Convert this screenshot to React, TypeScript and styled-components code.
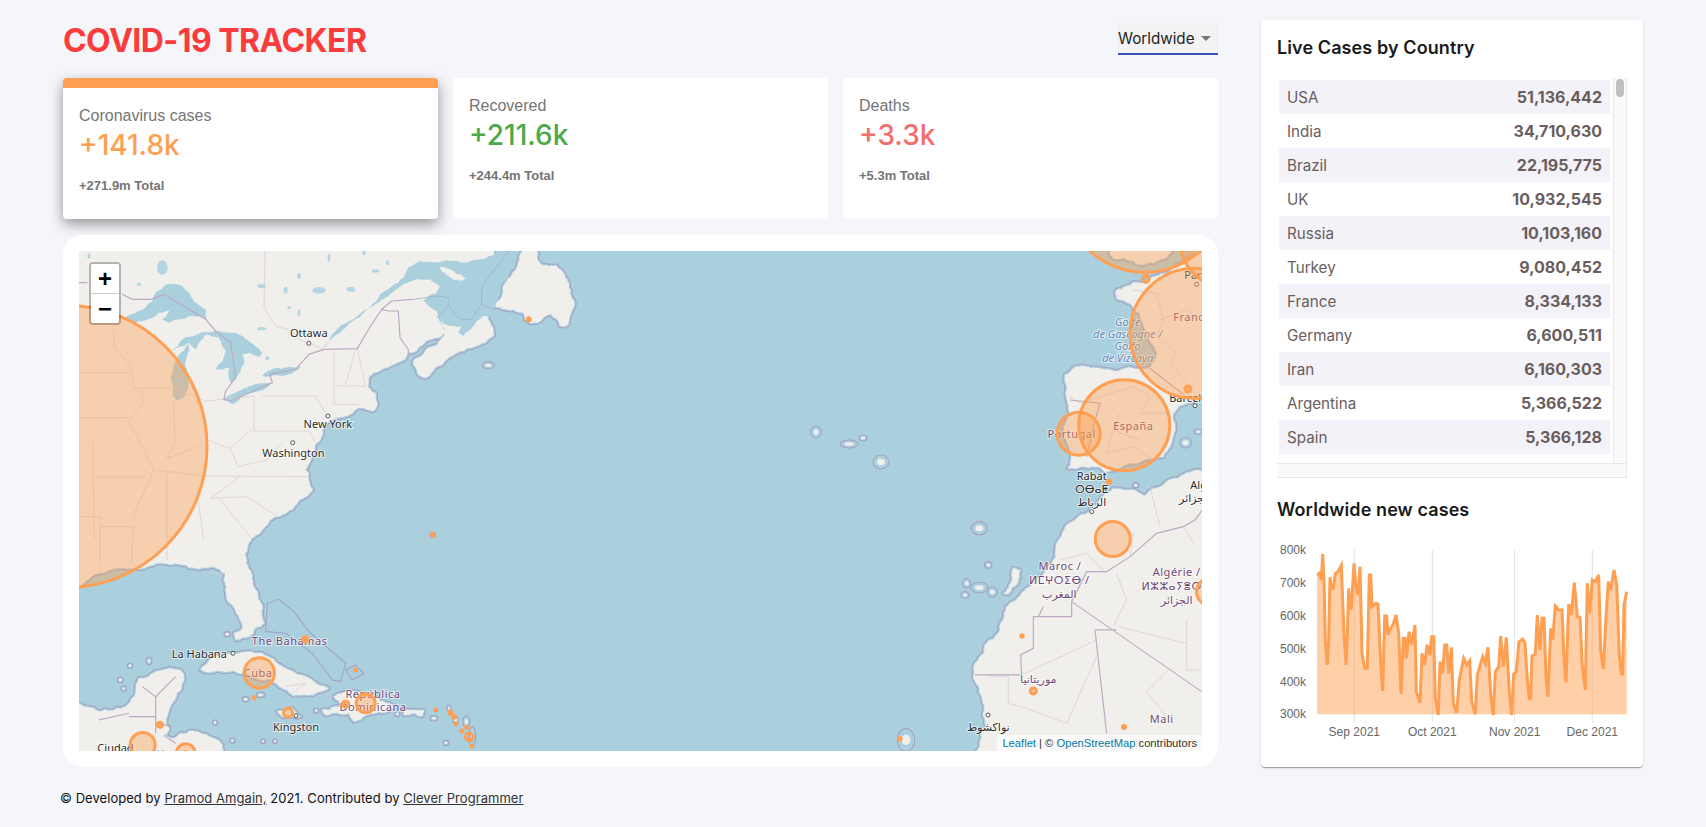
import React from "react";
import styled, { createGlobalStyle } from "styled-components";

const GlobalStyle = createGlobalStyle`
    html, body {
        margin: 0;
        padding: 0;
        background-color: #f5f6fa;
        font-family: Inter, "Liberation Sans", sans-serif;
        overflow: hidden;
    }
`;

//=========================
// 	      LAYOUT
//=========================

const AppWrap = styled.div`
    display: flex;
    justify-content: space-between;
    padding: 20px 63px 0 63px;
    height: 807px;
`;

const LeftColumn = styled.div`
    width: 1155px;
    display: flex;
    flex-direction: column;
`;

const Header = styled.div`
    height: 38px;
    margin-bottom: 20px;
    display: flex;
    align-items: center;
    justify-content: space-between;
`;

const Title = styled.h1`
    margin: 0;
    padding-top: 4px;
    font-size: 32px;
    line-height: 38px;
    font-weight: 700;
    letter-spacing: -0.55px;
    color: #fc3c3c;
`;

const CountrySelect = styled.div`
    width: 100px;
    height: 32px;
    box-sizing: border-box;
    display: flex;
    align-items: center;
    justify-content: space-between;
    padding-right: 7px;
    background-color: #f3f3f3;
    border-bottom: 2px solid #3f51b5;
    font-size: 15.2px;
    color: #1f1f1f;
`;

const SelectCaret = styled.span`
    width: 0;
    height: 0;
    border-left: 5px solid transparent;
    border-right: 5px solid transparent;
    border-top: 5px solid #757575;
`;

//=========================
// 	     INFO CARDS
//=========================

const Stats = styled.div`
    display: flex;
    gap: 15px;
    margin-bottom: 16px;
`;

const InfoCard = styled.div<{ $selected?: boolean }>`
    flex: 1;
    height: 141px;
    box-sizing: border-box;
    padding: 16px;
    background-color: #fff;
    border-radius: 4px;
    border-top: ${(p) => (p.$selected ? "10px solid #ff9f52" : "0")};
    box-shadow: ${(p) => (p.$selected ? "0 5px 14px rgba(0, 0, 0, 0.4)" : "none")};
`;

const InfoLabel = styled.div`
    font-family: "Liberation Sans", sans-serif;
    font-size: 16px;
    line-height: 24px;
    color: #757575;
`;

const InfoValue = styled.div<{ $tone: string }>`
    font-size: 28px;
    line-height: 34px;
    font-weight: 500;
    margin-bottom: 14px;
    color: ${(p) => p.$tone};
`;

const InfoTotal = styled.div`
    font-family: "Liberation Sans", sans-serif;
    font-size: 13px;
    line-height: 20px;
    font-weight: 700;
    color: #757575;
`;

//=========================
// 	        MAP
//=========================

const MapCard = styled.div`
    height: 532px;
    box-sizing: border-box;
    padding: 16px;
    background-color: #fff;
    border-radius: 20px;
`;

const MapFrame = styled.div`
    position: relative;
    height: 500px;
    overflow: hidden;
    background-color: #aad0de;
`;

const MapSvg = styled.svg`
    display: block;
    * {
        vector-effect: non-scaling-stroke;
    }
`;

const CoastHalo = styled.path`
    fill: none;
    stroke: #a5a0c0;
    stroke-width: 4.6;
    stroke-linejoin: round;
`;

const CoastGap = styled.path`
    fill: none;
    stroke: #aad0de;
    stroke-width: 2.6;
    stroke-linejoin: round;
`;

const Land = styled.path`
    fill: #f1efeb;
`;

const Water = styled.path`
    fill: #aad0de;
`;

const SmallLake = styled.ellipse`
    fill: #b4d6e2;
`;

const Shoal = styled.path`
    fill: none;
    stroke: #a5a0c0;
    stroke-width: 1.1;
`;

const CountryLine = styled.path`
    fill: none;
    stroke: #bcaac2;
    stroke-width: 1.2;
`;

const StateLine = styled.path`
    fill: none;
    stroke: #d8cfd6;
    stroke-width: 0.8;
`;

const SeaLine = styled.path`
    fill: none;
    stroke: #9fb3c4;
    stroke-width: 0.8;
`;

const IsleRing = styled.ellipse`
    fill: none;
    stroke: #a5a0c0;
    stroke-width: 1.1;
`;

const IsleCore = styled.ellipse`
    fill: #f1efeb;
`;

const Bubble = styled.circle`
    fill: rgba(255, 159, 82, 0.4);
    stroke: #ff9f52;
    stroke-width: 3;
`;

const CityDot = styled.circle`
    fill: #fff;
    stroke: #444;
    stroke-width: 0.9;
`;

const PlaceLabel = styled.text<{ $kind?: "country" | "sea" }>`
    font-family: "Noto Sans", "DejaVu Sans", sans-serif;
    font-size: 11px;
    font-style: ${(p) => (p.$kind === "sea" ? "italic" : "normal")};
    letter-spacing: ${(p) => (p.$kind === "country" ? "0.5px" : "0")};
    text-anchor: middle;
    fill: ${(p) => (p.$kind === "country" ? "#6e4a78" : p.$kind === "sea" ? "#5f87b8" : "#2b2b2b")};
    stroke: rgba(255, 255, 255, 0.65);
    stroke-width: 2px;
    paint-order: stroke;
`;

const ZoomControl = styled.div`
    position: absolute;
    top: 11px;
    left: 10px;
    width: 28px;
    border-radius: 4px;
    background-clip: padding-box;
    border: 2px solid rgba(0, 0, 0, 0.25);
`;

const ZoomButton = styled.div<{ $last?: boolean }>`
    height: 29px;
    display: flex;
    align-items: center;
    justify-content: center;
    background-color: #fff;
    font-family: "Liberation Sans", sans-serif;
    font-size: 24px;
    font-weight: 700;
    color: #000;
    border-bottom: ${(p) => (p.$last ? "0" : "1px solid #ccc")};
    border-radius: ${(p) => (p.$last ? "0 0 2px 2px" : "2px 2px 0 0")};
`;

const Attribution = styled.div`
    position: absolute;
    right: 0;
    bottom: 0;
    padding: 0 5px;
    background-color: rgba(255, 255, 255, 0.7);
    font-family: "Liberation Sans", sans-serif;
    font-size: 11.2px;
    line-height: 16px;
    color: #333;
`;

const AttributionLink = styled.span`
    color: #0078a8;
`;

//=========================
// 	      FOOTER
//=========================

const Footer = styled.div`
    margin-top: 22px;
    margin-left: -3px;
    font-size: 13px;
    line-height: 18px;
    letter-spacing: 0.05px;
    color: #111;
`;

const FooterLink = styled.a`
    color: #333;
    text-decoration: underline;
`;

//=========================
// 	   RIGHT PANEL
//=========================

const SidePanel = styled.div`
    width: 382px;
    height: 747px;
    box-sizing: border-box;
    padding: 16px;
    background-color: #fff;
    border-radius: 4px;
    box-shadow: 0 2px 1px -1px rgba(0, 0, 0, 0.2), 0 1px 1px 0 rgba(0, 0, 0, 0.14), 0 1px 3px 0 rgba(0, 0, 0, 0.12);
`;

const PanelTitle = styled.h3`
    margin: 0;
    padding-top: 1px;
    font-size: 18px;
    line-height: 22px;
    font-weight: 600;
    letter-spacing: 0.1px;
    color: #1a1a1a;
`;

const TableFrame = styled.div`
    margin-top: 19px;
    width: 350px;
    height: 400px;
    display: grid;
    grid-template-columns: 336px 14px;
    grid-template-rows: 385px 15px;
`;

const RowList = styled.div`
    padding: 2px 3px 0 2px;
    overflow: hidden;
`;

const CountryRow = styled.div`
    height: 34px;
    box-sizing: border-box;
    display: flex;
    align-items: center;
    justify-content: space-between;
    padding: 0 8px;
    font-size: 15.2px;
    color: #6a5d5d;
    &:nth-of-type(odd) {
        background-color: #f3f2f8;
    }
`;

const CountryCases = styled.strong`
    font-size: 16px;
    font-weight: 700;
`;

const VerticalTrack = styled.div`
    border-left: 1px solid #e8e8e8;
    border-right: 1px solid #e8e8e8;
    background-color: #fafafa;
    padding: 1px 2px 0 2px;
`;

const ScrollThumb = styled.div`
    width: 8px;
    height: 18px;
    border-radius: 4px;
    background-color: #c1c1c1;
`;

const HorizontalTrack = styled.div`
    grid-column: 1 / 3;
    background-color: #fafafa;
    border-top: 1px solid #e8e8e8;
    border-bottom: 1px solid #e8e8e8;
    border-right: 1px solid #e8e8e8;
`;

const ChartTitle = styled(PanelTitle)`
    margin-top: 20px;
`;

const ChartSvg = styled.svg`
    display: block;
    margin-top: 19px;
    overflow: visible;
`;

const ChartGrid = styled.line`
    stroke: #e2e2e2;
    stroke-width: 1;
`;

const ChartLine = styled.polyline`
    fill: none;
    stroke: #ff9f52;
    stroke-width: 3;
    stroke-linejoin: miter;
`;

const ChartArea = styled.polygon`
    fill: rgba(255, 159, 82, 0.5);
`;

const ChartLabel = styled.text<{ $axis: "x" | "y" }>`
    font-family: "Liberation Sans", sans-serif;
    font-size: 12px;
    fill: #666;
    text-anchor: ${(p) => (p.$axis === "y" ? "end" : "middle")};
`;

//=========================
// 	       DATA
//=========================

const countries = [
    ["USA", "51,136,442"],
    ["India", "34,710,630"],
    ["Brazil", "22,195,775"],
    ["UK", "10,932,545"],
    ["Russia", "10,103,160"],
    ["Turkey", "9,080,452"],
    ["France", "8,334,133"],
    ["Germany", "6,600,511"],
    ["Iran", "6,160,303"],
    ["Argentina", "5,366,522"],
    ["Spain", "5,366,128"],
];

const chartRaw = [
    201,135, 208,130, 214,150, 218,72, 222,150, 226,330, 232,405, 236,330, 240,142, 244,175, 250,175, 256,130,
    264,125, 274,106, 282,310, 288,405, 292,320, 296,175, 300,235, 304,235, 312,100, 318,170, 324,195, 330,110,
    336,370, 344,415, 352,415, 358,135, 362,135, 366,230, 378,220, 384,222, 392,400, 398,483, 404,258, 410,258,
    414,315, 422,295, 430,282, 438,255, 446,310, 453,492, 460,325, 465,325, 469,385, 477,305, 485,345, 495,285,
    499,485, 510,518, 516,370, 524,405, 531,345, 539,375, 545,320, 551,320, 556,505, 565,555, 570,395, 578,430,
    584,345, 590,345, 596,430, 604,352, 610,520, 620,548, 628,450, 641,385, 650,405, 659,392, 665,515, 676,553,
    682,435, 698,380, 706,400, 714,352, 722,495, 730,555, 736,425, 746,410, 752,318, 760,410, 769,322, 778,485,
    785,555, 791,432, 799,425, 807,335, 818,327, 825,340, 832,450, 838,505, 842,505, 846,377, 856,373, 862,255,
    870,360, 876,265, 882,265, 888,440, 894,500, 902,295, 908,330, 916,228, 926,240, 936,240, 942,385, 948,457,
    956,222, 964,255, 973,158, 982,260, 990,262, 997,410, 1006,480, 1012,160, 1019,250, 1027,150, 1036,155,
    1046,135, 1052,365, 1060,417, 1068,260, 1075,155, 1082,180, 1092,120, 1100,165, 1108,375, 1114,432, 1118,432,
    1122,225, 1130,185,
];

const chartPoints = chartRaw
    .reduce<string[]>((acc, v, i) => (i % 2 ? [...acc, `${(chartRaw[i - 1] / 3).toFixed(1)},${(v / 3).toFixed(1)}`] : acc), [])
    .join(" ");

const yTicks: [string, number][] = [
    ["800k", 20], ["700k", 52.7], ["600k", 85.7], ["500k", 118.7], ["400k", 151.7], ["300k", 184],
];

const xTicks: [string, number][] = [
    ["Sep 2021", 104.3], ["Oct 2021", 182.3], ["Nov 2021", 264.7], ["Dec 2021", 342.3],
];

// edges that run outside the map stay straight, or the jitter would bite into the land
const offMap = (a: [number, number], b: [number, number]) =>
    (a[0] < 0 && b[0] < 0) || (a[1] < 0 && b[1] < 0) || (a[0] >= 930 && b[0] >= 930 && a[1] < 1600 && b[1] < 1600 && a[0] < 1000) || (a[1] >= 1520 && b[1] >= 1520);

// coastlines get a bit of seeded jitter so that they don't look like polygons
const roughen = (trace: string, amount = 0.14, minLength = 7) => {
    const nums = (trace.match(/-?\d+(\.\d+)?/g) ?? []).map(Number);
    const pts: [number, number][] = [];
    for (let i = 0; i < nums.length; i += 2) pts.push([nums[i], nums[i + 1]]);
    let seed = trace.length * 7919 + 17;
    const rand = () => {
        seed = (seed * 1103515245 + 12345) % 2147483648;
        return seed / 2147483648 - 0.5;
    };
    const out: string[] = [];
    const split = (a: [number, number], b: [number, number], depth: number) => {
        const dx = b[0] - a[0];
        const dy = b[1] - a[1];
        const len = Math.hypot(dx, dy);
        if (depth === 0 || len < minLength) {
            out.push(`${b[0].toFixed(1)},${b[1].toFixed(1)}`);
            return;
        }
        const off = rand() * 2 * amount;
        const mid: [number, number] = [a[0] + dx / 2 - dy * off, a[1] + dy / 2 + dx * off];
        split(a, mid, depth - 1);
        split(mid, b, depth - 1);
    };
    pts.forEach((p, i) => {
        const next = pts[(i + 1) % pts.length];
        split(p, next, offMap(p, next) ? 0 : 4);
    });
    return `M${out.join(" L")} Z`;
};

const westLand = [
    "-20,-15 1240,-15 1225,190 1243,235 1243,255 1203,280 1153,300 1103,325 1038,380 1018,370 1003,340 1008,325 1038,300 1093,258 1095,245 1023,285 985,310 978,325 933,345 883,365 868,385 868,410 888,425 895,460 883,480 843,470 813,490 753,510 730,540 712,577 695,627 678,657 689,667 701,717 661,747 597,797 557,827 517,862 506,887 500,937 523,1007 530,1017 550,1067 555,1117 510,1157 470,1167 465,1147 490,1132 470,1082 445,1047 437,967 402,947 345,952 287,937 230,937 196,952 92,957 0,1007 -20,1020",
    "1248,165 1273,120 1298,75 1318,40 1343,-20 1378,-20 1373,20 1393,45 1433,45 1458,80 1473,115 1486,160 1468,220 1443,225 1418,190 1388,205 1353,215 1338,205 1333,185 1303,175 1283,175",
    "-20,1350 0,1357 60,1382 130,1372 170,1327 180,1282 230,1262 300,1257 315,1272 305,1317 270,1377 260,1417 270,1437 250,1457 280,1462 330,1442 400,1462 430,1482 440,1520 -20,1520",
    "365,1257 400,1222 470,1207 530,1207 600,1242 680,1277 748,1312 700,1332 640,1332 600,1307 570,1282 490,1267 430,1262",
    "730,1377 770,1367 790,1362 765,1337 790,1327 890,1337 950,1367 900,1382 860,1392 825,1412 810,1387 740,1392",
    "975,1377 1035,1379 1030,1395 975,1392",
    "595,1382 640,1372 665,1397 610,1397",
];

const gulfWater = "1258,-20 1258,0 1223,20 1163,35 1093,30 1023,30 988,50 973,80 903,130 853,180 803,215 753,265 740,285 730,291 753,270 783,245 843,200 883,165 933,130 973,100 1013,85 1053,85 1083,105 1073,125 1033,150 1073,180 1078,205 1093,235 1153,255 1183,225 1213,195 1235,195 1250,160 1300,-20";

const gulfLand = [
    "1248,165 1273,120 1298,75 1318,40 1343,-20 1378,-20 1373,20 1393,45 1433,45 1458,80 1473,115 1486,160 1468,220 1443,225 1418,190 1388,205 1353,215 1338,205 1333,185 1303,175 1283,175",
    "1073,200 1098,220 1148,225 1138,245 1098,235",
    "1080,50 1120,58 1165,80 1150,90 1110,75",
];

const westLakes = [
    "135,205 170,185 220,150 230,125 265,100 310,105 345,150 380,175 385,205 340,195 300,205 270,215 250,205 275,175 240,185 190,210 170,215",
    "275,380 285,340 300,310 330,280 330,300 318,340 330,400 315,440 295,450 280,430",
    "280,300 310,265 365,245 420,240 470,245 510,270 550,305 540,318 510,305 490,310 495,340 470,385 455,395 450,350 410,355 430,330 440,300 420,260 380,250 350,295 330,275 310,285",
    "430,445 490,415 578,395 570,405 520,425 460,460",
    "550,375 590,350 665,345 650,360 610,375",
];

const smallLakes: [number, number, number, number][] = [
    [250, 50, 16, 22], [720, 118, 20, 10], [548, 105, 13, 6], [812, 115, 9, 7], [620, 118, 6, 10], [660, 75, 5, 9],
    [750, 20, 4, 12], [548, 233, 14, 5], [565, 322, 6, 6], [855, 5, 5, 8], [180, 100, 7, 5], [30, 15, 5, 8],
    [660, 185, 4, 10], [630, 170, 5, 5], [815, 290, 2, 2], [890, 60, 12, 5], [925, 35, 5, 8], [820, 115, 8, 8],
];

const westBorders = [
    "M0,95 L25,95 M130,130 L160,145 L215,145 L255,130 L380,205 L410,240 L455,275 L470,380 L440,420 L435,445 L455,450 L580,395 L572,370 L650,355 L690,310 L735,295 L835,293 L875,225 L908,175 L928,180 L958,180 L963,260 L988,295 L988,325",
    "M908,175 L938,150 L1003,145",
    "M230,1337 L230,1447 M150,1397 L230,1397 M190,1307 L230,1337 L290,1277 M60,1407 L150,1387 M230,1417 L280,1427 M260,1457 L290,1477",
];

const westStates = [
    "M558,-10 L555,170 L590,225 L640,240 L660,265 L735,295",
    "M380,450 L525,435 L525,540 L690,540 L712,577 M550,435 L710,435 L745,495 M765,300 L765,460 L840,460 M770,405 L860,405 L835,293 M800,400 L830,295",
    "M385,567 L454,592 L517,537 M454,592 L477,647 L563,627 L609,577 M379,675 L689,677 M483,675 L396,742 L505,737 L597,797 M425,747 L517,862",
    "M105,240 L105,290 L155,345 L165,410 L190,430 L190,460 L150,510 L190,587 L224,657 L161,797 M0,365 L155,365 M165,412 L285,412 L380,450 M0,500 L145,500 M285,450 L287,577 L264,622 L356,587 M41,567 L46,867 M41,679 L201,679 M224,657 L385,675 M264,667 L264,927 M356,737 L374,867 M0,797 L64,797 L64,937 M64,827 L163,827 L158,937 M367,967 L437,967",
    "M620,1307 L680,1297 L640,1327 M500,1240 L560,1275",
];

const seaLines = [
    "M1298,-10 L1208,105 L1208,160 L1248,178 M1208,160 L1178,205 L1143,205 L1108,165 L1108,140 L1078,135 L1003,145 M1108,165 L1073,200",
];

const bahamaBank = "M560,1142 L565,1057 L600,1045 L645,1082 L690,1142 L800,1237 L785,1292 L760,1287 L700,1207 L620,1147 Z M800,1257 L830,1242 L855,1267 L820,1287 Z";

const westIsles: [number, number, number, number][] = [
    [1228, 343, 18, 11], [1061, 852, 8, 7], [445, 1150, 10, 8], [210, 1230, 9, 11], [153, 1244, 8, 8], [124, 1287, 9, 9],
    [134, 1313, 8, 8], [500, 1345, 11, 8], [545, 1332, 13, 8], [408, 1415, 8, 8], [552, 1471, 7, 7], [588, 1471, 7, 7],
    [460, 1469, 8, 8], [1101, 1476, 8, 8], [712, 1379, 8, 8], [955, 1389, 8, 8], [1065, 1402, 12, 8], [1110, 1372, 6, 10],
    [1162, 1412, 10, 18], [1180, 1457, 10, 30], [1130, 1407, 8, 10],
];

const eastLand = [
    "620,-5 640,55 700,62 760,70 800,52 860,-5",
    "930,40 860,60 800,100 770,108 745,120 700,128 650,150 650,175 690,190 720,220 735,270 755,310 770,345 750,385 700,385 600,385 545,378 495,405 500,470 510,520 490,590 515,640 505,685 550,680 590,680 620,695 650,690 700,670 790,650 825,560 820,520 860,490 930,455",
    "930,695 850,705 790,735 735,768 700,750 640,745 620,760 590,795 540,825 500,855 470,910 465,955 380,1045 320,1100 300,1170 260,1210 235,1260 220,1310 245,1370 250,1420 262,1460 245,1480 225,1560 930,1560",
];

const eastIsleLand = [
    "310,1060 340,985 360,990 352,1030 325,1062",
];

const eastIsles: [number, number, number, number][] = [
    [200, 1030, 12, 14], [238, 1043, 26, 16], [277, 1056, 15, 15], [195, 1065, 12, 10], [265, 975, 11, 10],
    [238, 865, 24, 20], [857, 608, 18, 16], [895, 575, 12, 8], [707, 736, 9, 8], [18, 1500, 26, 34],
];

const eastBorders = [
    "M750,385 L820,440 L860,470",
    "M510,480 L600,490 L580,560 L560,650",
    "M930,780 L885,840 L850,860 L770,880 L690,950 L620,995 L560,995 L515,1085 L515,1130 L400,1130 L400,1225 L362,1245 L365,1305 L225,1305",
    "M515,1085 L905,1355",
    "M585,1170 L620,1480 M585,1170 L650,1170",
    "M430,1100 L415,1130",
];

const eastStates = [
    "M700,150 L770,160 L790,240 L770,290 L830,340 M830,340 L810,370 L870,440 M780,240 L860,210 L906,240",
    "M510,470 L540,490 L600,470 L700,440 L750,470 L720,520 L800,520 M640,570 L660,520 M640,570 L620,640 L700,620 L760,660 M640,570 L720,600",
    "M270,1310 L325,1310 L325,1390 L380,1405 L500,1450 M365,1305 L590,1200 M590,1250 L500,1450 M655,1160 L860,1210 M860,1140 L860,1290 L905,1290 M805,1290 L740,1355 L800,1430 M650,1000 L680,1080 L640,1160 M750,740 L780,860 M850,860 L880,910",
    "M480,960 L560,940 L620,1000 M690,950 L700,880",
];

const azores: [number, number, number, number][] = [
    [737, 181, 5, 6], [770, 193, 9, 4], [784, 187, 4, 3], [802, 211, 8, 7],
];

const bubbles: [number, number, number][] = [
    [-13, 195.5, 141], [1045.3, 174.3, 45.5], [999.7, 182.7, 21.5], [1116, 82.3, 65], [1066, -60.7, 82], [1149, -11, 48],
    [1066.7, 28, 3.5], [1109, 138, 3], [1030, 230.7, 1.8], [1033.7, 288, 17.5], [1131, 340.7, 13.5], [943, 385, 1.2],
    [954.3, 440, 3], [1045, 476, 1.5], [821, 488, 1.2], [449.8, 68.3, 1.5], [354, 284, 1.5], [180.3, 422, 15.2],
    [226.3, 388.3, 2.5], [276.4, 419, 1], [175, 446.7, 1], [209, 461.7, 4.5], [266.7, 453, 3], [286.7, 452.3, 9.5],
    [356.8, 458.7, 1], [371.4, 461.7, 1.4], [375, 465.7, 1.4], [377, 472.7, 1], [387.8, 476.3, 1], [382.8, 480, 1],
    [390.3, 485.7, 3.8], [393, 495, 1], [81, 473.7, 2.5], [63.7, 494, 12.5], [106.7, 502.3, 9.5],
];

const cityDots: [number, number][] = [
    [229.8, 92.3], [248.9, 165], [213.7, 191.7], [154, 402.3], [217, 464.7], [1117.7, 33.3], [1116, 154.7], [1012.7, 260.7], [909, 464],
];

const placeLabels: { x: number; y: number; text: string; kind?: "country" | "sea" }[] = [
    { x: 229.8, y: 85.5, text: "Ottawa" },
    { x: 248.9, y: 177, text: "New York" },
    { x: 214.4, y: 206, text: "Washington" },
    { x: 120.3, y: 407, text: "La Habana" },
    { x: 210.6, y: 394, text: "The Bahamas", kind: "country" },
    { x: 179.2, y: 426, text: "Cuba", kind: "country" },
    { x: 217, y: 479.7, text: "Kingston" },
    { x: 294, y: 447, text: "República", kind: "country" },
    { x: 294, y: 460.3, text: "Dominicana", kind: "country" },
    { x: 36.5, y: 501, text: "Ciudad" },
    { x: 105, y: 507, text: "Honduras", kind: "country" },
    { x: 1118, y: 28, text: "Paris" },
    { x: 1113, y: 69.7, text: "France", kind: "country" },
    { x: 1048.7, y: 74.7, text: "Golfe", kind: "sea" },
    { x: 1048.7, y: 87, text: "de Gascogne /", kind: "sea" },
    { x: 1048.7, y: 99, text: "Golfo", kind: "sea" },
    { x: 1048.7, y: 111, text: "de Vizcaya", kind: "sea" },
    { x: 1116, y: 151.3, text: "Barcelona" },
    { x: 992.7, y: 187.3, text: "Portugal", kind: "country" },
    { x: 1054.3, y: 179, text: "España", kind: "country" },
    { x: 1012.7, y: 229, text: "Rabat" },
    { x: 1012.7, y: 241.7, text: "ⵔⴱⴰⵟ" },
    { x: 1012.7, y: 255.3, text: "الرباط" },
    { x: 1125, y: 238, text: "Alger" },
    { x: 1116, y: 251, text: "الجزائر" },
    { x: 981, y: 319, text: "Maroc /", kind: "country" },
    { x: 980.3, y: 333, text: "ⵍⵎⵖⵔⵉⴱ /", kind: "country" },
    { x: 980.3, y: 347, text: "المغرب", kind: "country" },
    { x: 1097.7, y: 325.3, text: "Algérie /", kind: "country" },
    { x: 1092.7, y: 338.7, text: "ⵍⵣⵣⴰⵢⴻⵔ", kind: "country" },
    { x: 1097.7, y: 353, text: "الجزائر", kind: "country" },
    { x: 959.3, y: 432, text: "موريتانيا", kind: "country" },
    { x: 909.3, y: 479.7, text: "نواكشوط" },
    { x: 1082.7, y: 472, text: "Mali", kind: "country" },
];

const westCoast = westLand.map((t) => roughen(t));
const gulfPath = roughen(gulfWater, 0.1);
const gulfIslands = gulfLand.map((t) => roughen(t));
const lakePaths = westLakes.map((t) => roughen(t, 0.1));
const eastCoast = eastLand.map((t) => roughen(t));
const eastIslands = eastIsleLand.map((t) => roughen(t));

//=========================
// 	    COMPONENTS
//=========================

const Atoll = ({ isle }: { isle: [number, number, number, number] }) => {
    const [cx, cy, rx, ry] = isle;
    return (
        <>
            <IsleRing cx={cx} cy={cy} rx={rx} ry={ry} />
            <IsleCore cx={cx} cy={cy} rx={rx * 0.5} ry={ry * 0.45} />
        </>
    );
};

const Coast = ({ paths }: { paths: string[] }) => (
    <>
        {paths.map((d) => <CoastHalo key={d} d={d} />)}
        {paths.map((d) => <CoastGap key={d} d={d} />)}
    </>
);

const CaseMap = () => (
    <MapFrame>
        <MapSvg width={1123} height={500} viewBox="0 0 1123 500">
            <g transform="scale(0.3333)">
                <Shoal d={bahamaBank} />
                <Coast paths={westCoast} />
                {westCoast.map((d) => <Land key={d} d={d} />)}
                <Water d={gulfPath} />
                {gulfIslands.map((d) => <Land key={d} d={d} />)}
                <SeaLine d={seaLines[0]} />
                {lakePaths.map((d) => <Water key={d} d={d} />)}
                {smallLakes.map(([cx, cy, rx, ry]) => <SmallLake key={`${cx}-${cy}`} cx={cx} cy={cy} rx={rx} ry={ry} />)}
                {westIsles.map((isle) => <Atoll key={`${isle[0]}-${isle[1]}`} isle={isle} />)}
                {westStates.map((d) => <StateLine key={d} d={d} />)}
                {westBorders.map((d) => <CountryLine key={d} d={d} />)}
            </g>
            <g transform="translate(821,-11) scale(0.3333)">
                <Coast paths={[...eastCoast, ...eastIslands]} />
                {eastCoast.map((d) => <Land key={d} d={d} />)}
                {eastIslands.map((d) => <Land key={d} d={d} />)}
                {eastIsles.map((isle) => <Atoll key={`${isle[0]}-${isle[1]}`} isle={isle} />)}
                {eastStates.map((d) => <StateLine key={d} d={d} />)}
                {eastBorders.map((d) => <CountryLine key={d} d={d} />)}
            </g>
            {azores.map((isle) => <Atoll key={isle[0]} isle={isle} />)}
            {cityDots.map(([cx, cy]) => <CityDot key={`${cx}-${cy}`} cx={cx} cy={cy} r={2} />)}
            {placeLabels.map((l) => (
                <PlaceLabel key={`${l.text}-${l.x}`} x={l.x} y={l.y} $kind={l.kind}>
                    {l.text}
                </PlaceLabel>
            ))}
            {bubbles.map(([cx, cy, r]) => <Bubble key={`${cx}-${cy}`} cx={cx} cy={cy} r={r} />)}
        </MapSvg>
        <ZoomControl>
            <ZoomButton>+</ZoomButton>
            <ZoomButton $last>−</ZoomButton>
        </ZoomControl>
        <Attribution>
            <AttributionLink>Leaflet</AttributionLink> | © <AttributionLink>OpenStreetMap</AttributionLink> contributors
        </Attribution>
    </MapFrame>
);

const NewCasesChart = () => (
    <ChartSvg width={350} height={216} viewBox="27 10 350 216">
        {xTicks.map(([, x]) => <ChartGrid key={x} x1={x} x2={x} y1={20} y2={192} />)}
        <ChartArea points={`67,184.3 ${chartPoints} 376.7,184.3`} />
        <ChartLine points={chartPoints} />
        {yTicks.map(([t, y]) => <ChartLabel key={t} $axis="y" x={56} y={y + 4}>{t}</ChartLabel>)}
        {xTicks.map(([t, x]) => <ChartLabel key={t} $axis="x" x={x} y={206}>{t}</ChartLabel>)}
    </ChartSvg>
);

export default function App() {
    return (
        <AppWrap>
            <GlobalStyle />
            <LeftColumn>
                <Header>
                    <Title>COVID-19 TRACKER</Title>
                    <CountrySelect>
                        Worldwide
                        <SelectCaret />
                    </CountrySelect>
                </Header>
                <Stats>
                    <InfoCard $selected>
                        <InfoLabel>Coronavirus cases</InfoLabel>
                        <InfoValue $tone="#ff9f52">+141.8k</InfoValue>
                        <InfoTotal>+271.9m Total</InfoTotal>
                    </InfoCard>
                    <InfoCard>
                        <InfoLabel>Recovered</InfoLabel>
                        <InfoValue $tone="#4ca84a">+211.6k</InfoValue>
                        <InfoTotal>+244.4m Total</InfoTotal>
                    </InfoCard>
                    <InfoCard>
                        <InfoLabel>Deaths</InfoLabel>
                        <InfoValue $tone="#f56c6c">+3.3k</InfoValue>
                        <InfoTotal>+5.3m Total</InfoTotal>
                    </InfoCard>
                </Stats>
                <MapCard>
                    <CaseMap />
                </MapCard>
                <Footer>
                    © Developed by <FooterLink>Pramod Amgain,</FooterLink> 2021. Contributed by{" "}
                    <FooterLink>Clever Programmer</FooterLink>
                </Footer>
            </LeftColumn>
            <SidePanel>
                <PanelTitle>Live Cases by Country</PanelTitle>
                <TableFrame>
                    <RowList>
                        {countries.map(([name, cases]) => (
                            <CountryRow key={name}>
                                <span>{name}</span>
                                <CountryCases>{cases}</CountryCases>
                            </CountryRow>
                        ))}
                    </RowList>
                    <VerticalTrack>
                        <ScrollThumb />
                    </VerticalTrack>
                    <HorizontalTrack />
                </TableFrame>
                <ChartTitle>Worldwide new cases</ChartTitle>
                <NewCasesChart />
            </SidePanel>
        </AppWrap>
    );
}
